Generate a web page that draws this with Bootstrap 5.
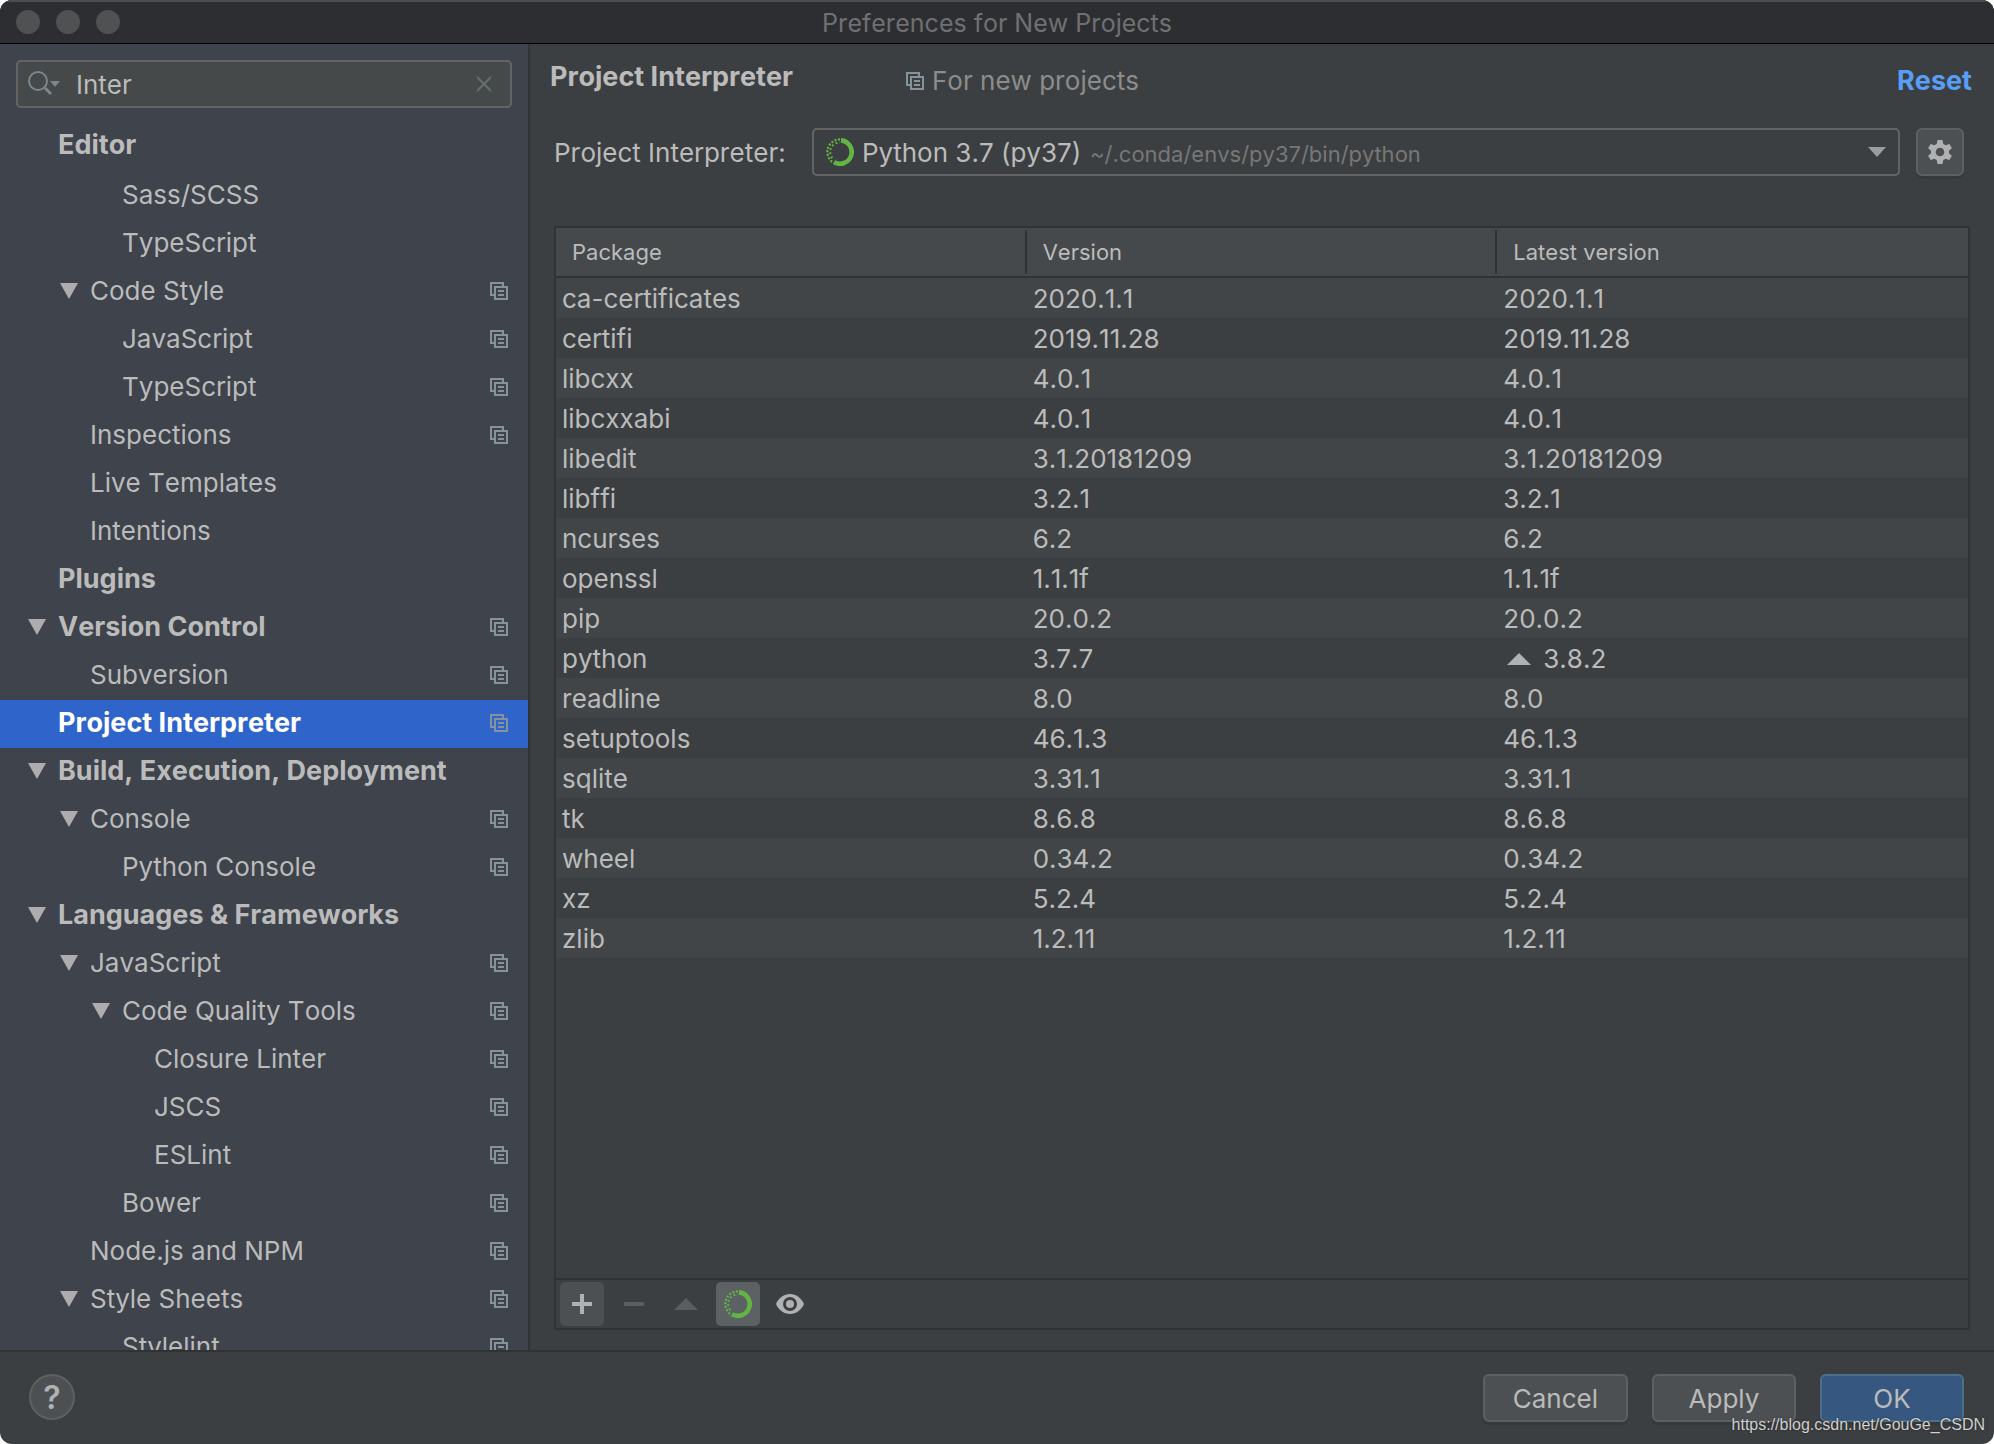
<!DOCTYPE html>
<html lang="en">
<head>
<meta charset="utf-8">
<meta name="viewport" content="width=device-width, initial-scale=1">
<title>Preferences for New Projects</title>
<link href="https://cdn.jsdelivr.net/npm/bootstrap@5.3.0/dist/css/bootstrap.min.css" rel="stylesheet">
<style>
  :root {
    --panel: #3c3f41; --side: #3e434c; --line: #323232; --text: #bbbbbb; --glyph: #87939a;
  }
  body { background: #fff; color: var(--text); font-family: Inter, "Liberation Sans", sans-serif; font-size: 26px; line-height: 32px; font-optical-sizing: none; font-kerning: none; }
  svg { display: block; flex: none; }
  .window { background: var(--panel); border-radius: 12px; overflow: hidden; }
  .titlebar { height: 44px; background: #2d2e31; border-top: 2px solid #4b4d4f; border-bottom: 1px solid #000; color: #6f7072; }
  .titlebar h1 { font-size: 25px; line-height: 42px; font-weight: 400; }
  .lights { position: absolute; left: 16px; top: 8px; gap: 16px; }
  .lights span { width: 24px; height: 24px; border-radius: 50%; background: #505153; }
  .sidebar { width: 530px; background: var(--side); border-right: 2px solid var(--line); }
  .search { height: 48px; margin: 16px 16px 12px; padding: 0 16px 0 10px; background: #45494a; border: 2px solid #646464; border-radius: 5px; }
  .search input { font: inherit; color: var(--text); background: none; border: 0; outline: 0; padding: 2px 0 0 14px; min-width: 0; }
  .plain { background: none; border: 0; padding: 0; }
  .tree a { display: flex; align-items: center; height: 48px; padding: 0 20px 2px 28px; color: var(--text); text-decoration: none; white-space: nowrap; }
  .tree .level1 { padding-left: 60px; }
  .tree .level2 { padding-left: 92px; }
  .tree .level3 { padding-left: 124px; }
  .tree a::before { content: ""; width: 18px; height: 16px; margin-right: 12px; flex: none; }
  .tree .open::before { background: #adadad; clip-path: polygon(0 0, 100% 0, 50% 100%); }
  .tree svg { margin-left: auto; color: var(--glyph); }
  .tree .top { font-size: 27px; font-weight: 700; }
  .tree .current { background: #2f65ca; color: #fff; }
  .tree .heading { padding: 2px 0; }
  .page { padding: 17px 24px 20px; }
  .page-head { margin-left: -4px; }
  .page-head h2 { font-size: 27px; line-height: 32px; font-weight: 700; width: 356px; }
  .page-head a { color: #589df6; font-size: 27px; font-weight: 700; text-decoration: none; margin-right: -2px; }
  .scope { color: #8c8c8c; gap: 8px; }
  .scope svg { color: var(--glyph); }
  .field { margin-top: 31px; }
  .field label { width: 242px; padding-top: 2px; }
  .combo { height: 48px; border: 2px solid #646464; border-radius: 5px; padding: 0 12px; }
  .combo select { appearance: none; font: inherit; color: var(--text); background: none; border: 0; outline: 0; padding: 2px 0 0; }
  .combo .path { font-size: 22px; color: #777; padding-top: 3px; }
  .tool { color: #afb1b3; background: #4c5052; border: 2px solid #5e6060; border-radius: 6px; box-shadow: 0 3px 1px #36393a; }
  .gear { width: 48px; height: 48px; margin-right: 6px; }
  .packages { margin-top: 50px; border: 2px solid var(--line); }
  .packages table { width: 100%; table-layout: fixed; border-collapse: separate; border-spacing: 0; }
  .packages th { height: 50px; font-size: 22px; font-weight: 400; padding: 0 16px; background: linear-gradient(var(--line), var(--line)) right center / 2px 44px no-repeat #45494b; border-bottom: 2px solid var(--line); }
  .packages th:last-child { background: #45494b; }
  .packages td { height: 40px; padding: 2px 6px 0; }
  .packages tbody tr:nth-child(odd) { background: #414547; }
  .actions { height: 50px; border-top: 2px solid var(--line); padding: 2px 4px; gap: 8px; }
  .actions button { width: 44px; height: 44px; border: 0; border-radius: 5px; background: none; color: #afb1b3; padding: 0; }
  .actions button:disabled { color: #5c5d5e; }
  .actions .hovered { background: #4c5052; }
  .actions .pressed { background: #5c6164; }
  .footer { height: 94px; border-top: 2px solid var(--line); padding: 22px 30px 0 29px; gap: 24px; }
  .footer .tool { min-width: 144px; height: 48px; color: var(--text); padding: 2px 28px 0; }
  .footer .ok { background: #365880; border-color: #4c708c; }
  .footer .help { min-width: 0; width: 46px; height: 46px; padding: 2px 0 0; border-radius: 50%; box-shadow: none; font-size: 32px; font-weight: 600; line-height: 40px; color: #afb1b3; }
  .watermark { position: absolute; right: 9px; bottom: 8px; font: 16px/22px "Liberation Sans", sans-serif; color: #d0d0d0; text-shadow: 0 0 2px #222; }
</style>
</head>
<body>
<svg width="0" height="0" class="position-absolute" aria-hidden="true">
  <symbol id="copy" viewBox="0 0 18 18"><path d="M13 4V1H1v12h3M5 5h12v12H5zM8 9h6M8 13h6" fill="none" stroke="currentColor" stroke-width="2"/></symbol>
  <symbol id="conda" viewBox="0 0 28 28">
    <path d="M15 2.400A11.700 11.700 0 1 1 8 24.100" fill="none" stroke="#62b543" stroke-width="4.600"/>
    <path d="M14 1.400A12.600 12.600 0 0 0 7 24.500" fill="none" stroke="#62b543" stroke-width="2.200" stroke-dasharray="2 1.600"/>
    <path d="M14 4.400A9.700 9.700 0 0 0 8 21.800" fill="none" stroke="#62b543" stroke-width="2" stroke-dasharray="1.800 2.400" stroke-dashoffset="1.500"/>
  </symbol>
</svg>

<div class="window vh-100 d-flex flex-column position-relative">
  <header class="titlebar position-relative text-center flex-shrink-0">
    <div class="lights d-flex"><span></span><span></span><span></span></div>
    <h1 class="m-0">Preferences for New Projects</h1>
  </header>

  <div class="d-flex flex-grow-1 overflow-hidden">
    <aside class="sidebar flex-shrink-0 overflow-hidden">
      <div class="search d-flex align-items-center">
        <svg width="34" height="28" viewBox="0 0 34 28" fill="none" stroke="#7b868d" stroke-width="2"><circle cx="10" cy="11" r="9"/><path d="M17 18l6 6" stroke-width="3"/><path d="M22 11h10l-5 6z" fill="#7b868d" stroke="none"/></svg>
        <input class="flex-grow-1" type="text" value="Inter" aria-label="Search settings">
        <button class="plain" type="button" aria-label="Clear"><svg width="20" height="20" viewBox="0 0 20 20" stroke="#656e72" stroke-width="2"><path d="M3 3l14 14M17 3L3 17"/></svg></button>
      </div>
      <nav aria-label="Settings">
        <ul class="tree list-unstyled m-0">
          <li class="heading"><a class="top" href="#">Editor</a></li>
          <li><a class="level2" href="#">Sass/SCSS</a></li>
          <li><a class="level2" href="#">TypeScript</a></li>
          <li><a class="level1 open" href="#">Code Style<svg width="18" height="18"><use href="#copy"/></svg></a></li>
          <li><a class="level2" href="#">JavaScript<svg width="18" height="18"><use href="#copy"/></svg></a></li>
          <li><a class="level2" href="#">TypeScript<svg width="18" height="18"><use href="#copy"/></svg></a></li>
          <li><a class="level1" href="#">Inspections<svg width="18" height="18"><use href="#copy"/></svg></a></li>
          <li><a class="level1" href="#">Live Templates</a></li>
          <li><a class="level1" href="#">Intentions</a></li>
          <li><a class="top" href="#">Plugins</a></li>
          <li><a class="top open" href="#">Version Control<svg width="18" height="18"><use href="#copy"/></svg></a></li>
          <li><a class="level1" href="#">Subversion<svg width="18" height="18"><use href="#copy"/></svg></a></li>
          <li><a class="top current" href="#" aria-current="page">Project Interpreter<svg width="18" height="18"><use href="#copy"/></svg></a></li>
          <li><a class="top open" href="#">Build, Execution, Deployment</a></li>
          <li><a class="level1 open" href="#">Console<svg width="18" height="18"><use href="#copy"/></svg></a></li>
          <li><a class="level2" href="#">Python Console<svg width="18" height="18"><use href="#copy"/></svg></a></li>
          <li><a class="top open" href="#">Languages &amp; Frameworks</a></li>
          <li><a class="level1 open" href="#">JavaScript<svg width="18" height="18"><use href="#copy"/></svg></a></li>
          <li><a class="level2 open" href="#">Code Quality Tools<svg width="18" height="18"><use href="#copy"/></svg></a></li>
          <li><a class="level3" href="#">Closure Linter<svg width="18" height="18"><use href="#copy"/></svg></a></li>
          <li><a class="level3" href="#">JSCS<svg width="18" height="18"><use href="#copy"/></svg></a></li>
          <li><a class="level3" href="#">ESLint<svg width="18" height="18"><use href="#copy"/></svg></a></li>
          <li><a class="level2" href="#">Bower<svg width="18" height="18"><use href="#copy"/></svg></a></li>
          <li><a class="level1" href="#">Node.js and NPM<svg width="18" height="18"><use href="#copy"/></svg></a></li>
          <li><a class="level1 open" href="#">Style Sheets<svg width="18" height="18"><use href="#copy"/></svg></a></li>
          <li><a class="level2" href="#">Stylelint<svg width="18" height="18"><use href="#copy"/></svg></a></li>
        </ul>
      </nav>
    </aside>

    <main class="page d-flex flex-column flex-grow-1">
      <div class="page-head d-flex">
        <h2 class="m-0">Project Interpreter</h2>
        <div class="scope d-flex align-items-center pt-1"><svg width="18" height="18"><use href="#copy"/></svg>For new projects</div>
        <a class="ms-auto pt-1" href="#">Reset</a>
      </div>
      <div class="field d-flex align-items-center gap-3">
        <label for="interpreter" class="text-nowrap flex-shrink-0">Project Interpreter:</label>
        <div class="combo d-flex align-items-center flex-grow-1">
          <svg class="me-2" width="28" height="28"><use href="#conda"/></svg>
          <select id="interpreter" class="me-2"><option>Python 3.7 (py37)</option></select>
          <span class="path">~/.conda/envs/py37/bin/python</span>
          <svg class="ms-auto" width="18" height="10" viewBox="0 0 18 10"><path d="M0 0h18l-9 10z" fill="#9a9c9e"/></svg>
        </div>
        <button class="tool gear d-flex align-items-center justify-content-center p-0" type="button" aria-label="Interpreter settings">
          <svg width="26" height="26" viewBox="0 0 26 26" fill="#afb1b3" fill-rule="evenodd"><path d="M10.500 0h5l.8 3.900 2.300 1.300 3.800-1.300 2.500 4.300-3 2.600v2.400l3 2.600-2.500 4.300-3.800-1.300-2.300 1.300-.8 3.900h-5l-.8-3.900-2.300-1.300-3.800 1.300-2.500-4.300 3-2.600v-2.400l-3-2.600 2.500-4.300 3.800 1.300 2.300-1.300zM13 7.700a4.300 4.300 0 1 0 0 8.600 4.300 4.300 0 0 0 0-8.600z" transform="translate(0 1)"/></svg>
        </button>
      </div>

      <section class="packages d-flex flex-column flex-grow-1">
        <table>
          <thead><tr><th scope="col">Package</th><th scope="col">Version</th><th scope="col">Latest version</th></tr></thead>
          <tbody>
            <tr><td>ca-certificates</td><td>2020.1.1</td><td>2020.1.1</td></tr>
            <tr><td>certifi</td><td>2019.11.28</td><td>2019.11.28</td></tr>
            <tr><td>libcxx</td><td>4.0.1</td><td>4.0.1</td></tr>
            <tr><td>libcxxabi</td><td>4.0.1</td><td>4.0.1</td></tr>
            <tr><td>libedit</td><td>3.1.20181209</td><td>3.1.20181209</td></tr>
            <tr><td>libffi</td><td>3.2.1</td><td>3.2.1</td></tr>
            <tr><td>ncurses</td><td>6.2</td><td>6.2</td></tr>
            <tr><td>openssl</td><td>1.1.1f</td><td>1.1.1f</td></tr>
            <tr><td>pip</td><td>20.0.2</td><td>20.0.2</td></tr>
            <tr><td>python</td><td>3.7.7</td><td><span class="d-flex align-items-center"><svg class="me-1" width="36" height="12" viewBox="0 0 36 12"><path d="M4 12h24L16 0z" fill="#afb1b3"/></svg>3.8.2</span></td></tr>
            <tr><td>readline</td><td>8.0</td><td>8.0</td></tr>
            <tr><td>setuptools</td><td>46.1.3</td><td>46.1.3</td></tr>
            <tr><td>sqlite</td><td>3.31.1</td><td>3.31.1</td></tr>
            <tr><td>tk</td><td>8.6.8</td><td>8.6.8</td></tr>
            <tr><td>wheel</td><td>0.34.2</td><td>0.34.2</td></tr>
            <tr><td>xz</td><td>5.2.4</td><td>5.2.4</td></tr>
            <tr><td>zlib</td><td>1.2.11</td><td>1.2.11</td></tr>
          </tbody>
        </table>
        <div class="actions d-flex mt-auto">
          <button class="hovered" type="button" aria-label="Install"><svg class="mx-auto" width="20" height="20" viewBox="0 0 20 20"><path d="M8 0h4v8h8v4h-8v8H8v-8H0V8h8z" fill="currentColor"/></svg></button>
          <button type="button" aria-label="Uninstall" disabled><svg class="mx-auto" width="20" height="4"><path d="M0 0h20v4H0z" fill="currentColor"/></svg></button>
          <button type="button" aria-label="Upgrade" disabled><svg class="mx-auto" width="24" height="12"><path d="M0 12h24L12 0z" fill="currentColor"/></svg></button>
          <button class="pressed" type="button" aria-label="Use Conda package manager"><svg class="mx-auto" width="28" height="28"><use href="#conda"/></svg></button>
          <button type="button" aria-label="Show early releases"><svg class="mx-auto" width="28" height="20" viewBox="0 0 28 20" fill="currentColor"><path fill-rule="evenodd" d="M14 0c6 0 11.500 4 14 10-2.500 6-8 10-14 10S2.500 16 0 10C2.500 4 8 0 14 0zm0 3a7 7 0 1 0 0 14 7 7 0 0 0 0-14z"/><circle cx="14" cy="10" r="4"/></svg></button>
        </div>
      </section>
    </main>
  </div>

  <footer class="footer d-flex flex-shrink-0">
    <button class="tool help me-auto" type="button" aria-label="Help">?</button>
    <button class="tool" type="button">Cancel</button>
    <button class="tool" type="button">Apply</button>
    <button class="tool ok" type="button">OK</button>
  </footer>
  <div class="watermark">https://blog.csdn.net/GouGe_CSDN</div>
</div>
<script src="https://cdn.jsdelivr.net/npm/bootstrap@5.3.0/dist/js/bootstrap.bundle.min.js"></script>
</body>
</html>
